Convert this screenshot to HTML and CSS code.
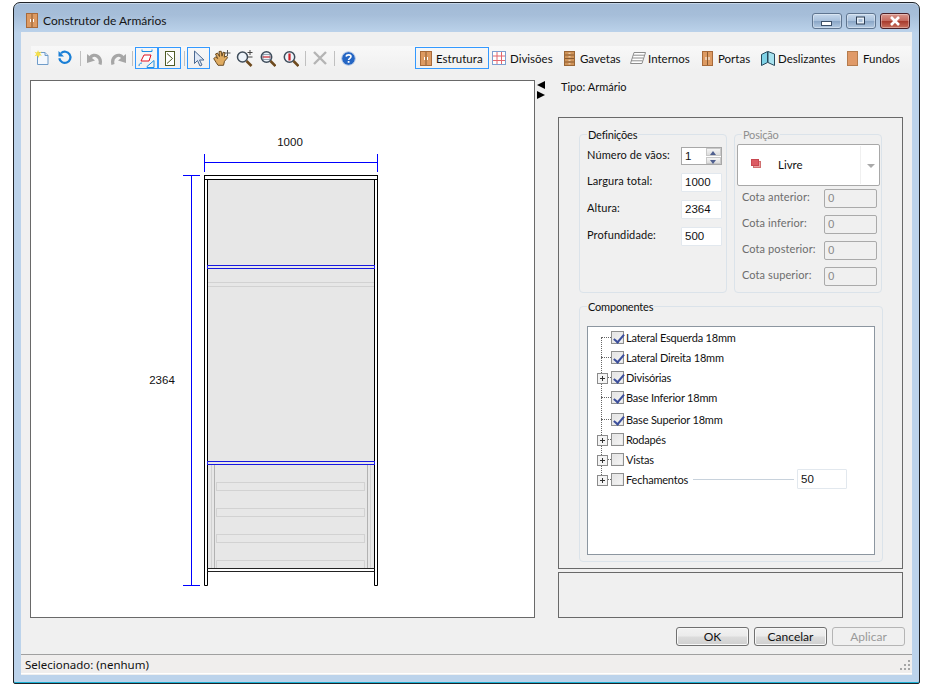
FILE: index.html
```html
<!DOCTYPE html>
<html lang="pt">
<head>
<meta charset="utf-8">
<title>Construtor de Armários</title>
<link rel="stylesheet" href="styles.css">
</head>
<body>
<div class="window">
  <header class="titlebar">
    <svg class="title-icon" width="12" height="15" viewBox="0 0 12 15"><rect x=".5" y=".5" width="11" height="14" fill="#dd9a62" stroke="#a86a3a"/><path d="M6 1v13" stroke="#8a5a30"/><path d="M4.500 6v3M7.500 6v3" stroke="#fff"/></svg>
    <span class="title-text">Construtor de Armários</span>
    <div class="caption">
      <div class="cap cap-min"><svg width="12" height="6" viewBox="0 0 12 6"><rect x=".5" y=".5" width="10" height="4" fill="#fff" stroke="#3b4f68"/></svg></div>
      <div class="cap cap-max"><svg width="12" height="10" viewBox="0 0 12 10"><rect x="1.500" y="1" width="8" height="7" fill="#e6eef7" stroke="#2d3e55"/><rect x="3.500" y="3" width="4" height="3" fill="#a9bfd8"/></svg></div>
      <div class="cap cap-close"><svg width="14" height="10" viewBox="0 0 14 10"><path d="M3 1l8 8M11 1l-8 8" stroke="#fff" stroke-width="2.600"/></svg></div>
    </div>
  </header>
  <div class="client">
    <div class="toolbar">
      <div class="tools">
        <span class="tool tool-new"><svg width="16" height="16" viewBox="0 0 16 16"><path d="M3.500 2.500h7.500l3 3v9h-10.500z" fill="#f4f8fd" stroke="#6f9cc9"/><path d="M11 2.500v3h3" fill="#d8e6f4" stroke="#6f9cc9"/><path d="M4 0l1 2.600L7.800 1.500 6 3.800 8 5.500 5.300 5.400 4.500 8 3.300 5.500.5 6.300 2.300 4 .5 1.800l2.600.7z" fill="#f5e04a"/></svg></span>
        <span class="tool"><svg width="16" height="16" viewBox="0 0 16 16"><path d="M4 3.200a5.600 5.600 0 1 1-1.700 5" fill="none" stroke="#1a7fd6" stroke-width="2.200"/><path d="M1.500 1v5.500h5.500z" fill="#1a7fd6"/></svg></span>
        <span class="tool-sep sep-a"></span>
        <span class="tool wide"><svg width="17" height="15" viewBox="0 0 17 15"><path d="M14 13.500C16 6 8 1 4 7" fill="none" stroke="#a6a6a6" stroke-width="3.200"/><path d="M1 3l8 6.500-8 2.500z" fill="#a6a6a6"/></svg></span>
        <span class="tool wide"><svg width="17" height="15" viewBox="0 0 17 15"><path d="M3 13.500C1 6 9 1 13 7" fill="none" stroke="#a6a6a6" stroke-width="3.200"/><path d="M16 3L8 9.500l8 2.500z" fill="#a6a6a6"/></svg></span>
        <span class="tool-sep sep-b"></span>
        <span class="tool-on"><svg width="17" height="19" viewBox="0 0 17 19"><path d="M4 .5v2h10v-2" fill="none" stroke="#1f8fe0"/><path d="M3 12l3-6h7l-2 6z" fill="#fff" stroke="#e01020"/><path d="M1 17c0-2 1-3 3-3M9 18.500v-1l7-6v7z" fill="none" stroke="#1f8fe0"/></svg></span>
        <span class="tool-on"><svg width="10" height="15" viewBox="0 0 10 15"><rect x=".5" y=".5" width="9" height="14" fill="#fff" stroke="#4d5a24"/><path d="M2 2.500l5.500 5-5.500 5" fill="none" stroke="#4d5a24"/></svg></span>
        <span class="tool-sep"></span>
        <span class="tool-on"><svg width="12" height="17" viewBox="0 0 12 17"><path d="M1.500 1v12.500l3-3 2.500 5.500 2-1-2.500-5h4.500z" fill="#dfe8f6" stroke="#4a6890"/></svg></span>
        <span class="tool"><svg width="18" height="17" viewBox="0 0 18 17"><path d="M.7 8.500l2-1.500 2 1.500L2.500 4l2-1 2 3.500L6 1.500l2.200-.3.800 5 1-4 2 .5-.8 4.500 2.300-1.200 1 1.800-3 3.500-1 4H5l-2-3z" fill="#e0ac62" stroke="#5e3e16" stroke-width=".9"/><path d="M14.500 0v6M11.500 3h6" stroke="#555"/></svg></span>
        <span class="tool"><svg width="17" height="17" viewBox="0 0 17 17"><circle cx="6.500" cy="7" r="5" fill="#eef4fa" stroke="#3e4c5a" stroke-width="1.500"/><path d="M10.500 11l5 5" stroke="#6e4a1e" stroke-width="2.600"/><path d="M14 0v5M11.500 2.500h5M11.500 7h5" stroke="#444"/></svg></span>
        <span class="tool"><svg width="16" height="17" viewBox="0 0 16 17"><circle cx="6.500" cy="7" r="5.200" fill="#eef4fa" stroke="#3e4c5a" stroke-width="1.500"/><path d="M10.500 11l5 5" stroke="#6e4a1e" stroke-width="2.600"/><path d="M2.500 7h8" stroke="#d02028" stroke-width="1.200"/><path d="M3 4.500h7v5H3z" fill="none" stroke="#596d80" stroke-width=".6"/></svg></span>
        <span class="tool"><svg width="16" height="17" viewBox="0 0 16 17"><circle cx="6.500" cy="7" r="5.200" fill="#eef4fa" stroke="#3e4c5a" stroke-width="1.500"/><path d="M10.500 11l5 5" stroke="#6e4a1e" stroke-width="2.600"/><path d="M6.500 3.500v7" stroke="#d02028" stroke-width="2.200"/></svg></span>
        <span class="tool-sep"></span>
        <span class="tool"><svg width="14" height="14" viewBox="0 0 14 14"><path d="M1 1l12 12M13 1L1 13" stroke="#b4b4b4" stroke-width="2.400"/></svg></span>
        <span class="tool-sep"></span>
        <span class="tool"><svg width="15" height="15" viewBox="0 0 15 15"><circle cx="7.500" cy="7.500" r="6.800" fill="#2566c4" stroke="#b9cbe6"/><path d="M5.200 5.600c.3-2.300 4.800-2.300 4.800 0 0 1.700-2.400 1.700-2.400 3.500" fill="none" stroke="#fff" stroke-width="1.600"/><rect x="6.700" y="10" width="1.800" height="1.800" fill="#fff"/></svg></span>
      </div>
      <div class="tabs">
        <span class="tab tab-on tab-estrutura"><svg width="12" height="15" viewBox="0 0 12 15"><rect x=".5" y=".5" width="11" height="14" fill="#dd9a62" stroke="#a86a3a"/><path d="M6 1v13" stroke="#8a5a30"/><path d="M4.500 6v3M7.500 6v3" stroke="#fff"/></svg>Estrutura</span>
        <span class="tab tab-divisoes"><svg width="14" height="14" viewBox="0 0 14 14"><rect x=".5" y=".5" width="13" height="13" fill="#fff" stroke="#7e9fd0"/><path d="M5 1v12M9.500 1v12M1 5h12M1 9.500h12" stroke="#e2666e"/></svg>Divisões</span>
        <span class="tab tab-gavetas"><svg width="11" height="15" viewBox="0 0 11 15"><rect x=".5" y=".5" width="10" height="14" fill="#cf9358" stroke="#9a6636"/><path d="M1 4h9M1 7.500h9M1 11h9" stroke="#8a5a30"/><path d="M4.500 2.300h2M4.500 5.800h2M4.500 9.300h2M4.500 12.800h2" stroke="#f0dcc4"/></svg>Gavetas</span>
        <span class="tab tab-internos"><svg width="16" height="12" viewBox="0 0 16 12"><path d="M4 .5h11.500L12 11.500H.5z" fill="#fff" stroke="#8d8d8d"/><path d="M3.200 3.200h11M2.300 6h11M1.500 8.800h11" stroke="#8d8d8d"/></svg>Internos</span>
        <span class="tab tab-portas"><svg width="11" height="15" viewBox="0 0 11 15"><rect x=".5" y=".5" width="10" height="14" fill="#dd9a62" stroke="#a86a3a"/><path d="M5.500 1v13" stroke="#8a5a30"/><path d="M4 6v3M7 6v3" stroke="#fff"/></svg>Portas</span>
        <span class="tab tab-deslizantes"><svg width="14" height="15" viewBox="0 0 14 15"><path d="M.5 3.500l6-3v11l-6 3z" fill="#7fd2e6" stroke="#27495c"/><path d="M7 .5l6.500 2.500v11.500L7 11.500z" fill="#a7e2ef" stroke="#27495c"/></svg>Deslizantes</span>
        <span class="tab tab-fundos"><svg width="11" height="15" viewBox="0 0 11 15"><rect x=".5" y=".5" width="10" height="14" fill="#e09a68" stroke="#b57c4d"/></svg>Fundos</span>
      </div>
    </div>

    <main class="main">
      <div class="canvas">
        <svg class="drawing" width="503" height="536" viewBox="31 81 503 536">
          <g fill="#e7e7e7">
            <rect x="207" y="179" width="168" height="390"/>
          </g>
          <g fill="none" stroke="#d2d2d2" stroke-width="1">
            <path d="M208 282.500h166M208 286.500h166"/>
            <rect x="216.500" y="482.500" width="148" height="8"/>
            <rect x="216.500" y="508.500" width="148" height="8"/>
            <rect x="216.500" y="534.500" width="148" height="8"/>
            <path d="M216.500 568v-7.500h148v7.500"/>
            <path d="M211.500 464v104M370.500 464v104"/>
          </g>
          <path d="M214.500 464v104M367.500 464v104" stroke="#b2b2b2" fill="none"/>
          <g fill="none" stroke="#000">
            <rect x="204.500" y="175.500" width="173" height="4"/>
            <path d="M204.500 179.500v406h3v-406M374.500 179.500v406h3v-406"/>
            <path d="M207.500 568.500h167M207.500 571.500h167" stroke="#222"/>
          </g>
          <g fill="none" stroke="#1818e0">
            <rect x="207.500" y="265.500" width="167" height="3"/>
            <rect x="207.500" y="461.500" width="167" height="3"/>
          </g>
          <g fill="none" stroke="#0000ff">
            <path d="M204.500 154v18M377.500 154v18M204.500 162.500h173"/>
            <path d="M183 175.500h17M183 585.500h17M191.500 175.500v410"/>
          </g>
          <text class="dim" x="290" y="146" text-anchor="middle">1000</text>
          <text class="dim" x="162" y="384" text-anchor="middle">2364</text>
        </svg>
      </div>
      <div class="arrows">
        <span class="arrow-left"></span>
        <span class="arrow-right"></span>
      </div>
      <div class="side">
        <div class="tipo">Tipo: Armário</div>
        <section class="panel">
          <div class="groups-top">
            <fieldset class="group group-def">
              <legend>Definições</legend>
              <div class="def-grid">
                <label>Número de vãos:</label>
                <div class="spin"><span>1</span><div class="spin-btns"><i class="up"></i><i class="down"></i></div></div>
                <label>Largura total:</label>
                <div class="field">1000</div>
                <label>Altura:</label>
                <div class="field">2364</div>
                <label>Profundidade:</label>
                <div class="field">500</div>
              </div>
            </fieldset>
            <fieldset class="group group-pos">
              <legend>Posição</legend>
              <div class="combo">
                <div class="combo-value">
                  <svg width="10" height="9" viewBox="0 0 10 9"><rect x="2.500" y="2.500" width="7" height="6" fill="#e8a0a0" stroke="#d07070"/><rect x=".5" y=".5" width="7" height="6" fill="#dc5a62" stroke="#c84850"/></svg>
                  <span>Livre</span>
                </div>
                <i class="combo-arrow"></i>
              </div>
              <div class="cota-grid">
                <label>Cota anterior:</label><div class="field-off">0</div>
                <label>Cota inferior:</label><div class="field-off">0</div>
                <label>Cota posterior:</label><div class="field-off">0</div>
                <label>Cota superior:</label><div class="field-off">0</div>
              </div>
            </fieldset>
          </div>
          <fieldset class="group group-comp">
            <legend>Componentes</legend>
            <div class="tree">
              <div class="rows">
                <div class="row"><i class="stub"></i><i class="check on"></i><span>Lateral Esquerda 18mm</span></div>
                <div class="row"><i class="stub"></i><i class="check on"></i><span>Lateral Direita 18mm</span></div>
                <div class="row"><i class="plus"></i><i class="check on"></i><span>Divisórias</span></div>
                <div class="row"><i class="stub"></i><i class="check on"></i><span>Base Inferior 18mm</span></div>
                <div class="row tall"><i class="stub"></i><i class="check on"></i><span>Base Superior 18mm</span></div>
                <div class="row"><i class="plus"></i><i class="check"></i><span>Rodapés</span></div>
                <div class="row"><i class="plus"></i><i class="check"></i><span>Vistas</span></div>
                <div class="row"><i class="plus"></i><i class="check"></i><span>Fechamentos</span><b class="slider"></b><div class="field field-tree">50</div></div>
              </div>
            </div>
          </fieldset>
        </section>
        <section class="panel-empty"></section>
      </div>
    </main>

    <div class="actions">
      <button class="btn" type="button">OK</button>
      <button class="btn" type="button">Cancelar</button>
      <button class="btn" type="button" disabled>Aplicar</button>
    </div>
    <footer class="status">
      <span>Selecionado: (nenhum)</span>
      <svg class="grip" width="12" height="12" viewBox="0 0 12 12"><path d="M9 1h2v2H9zM5 5h2v2H5zM9 5h2v2H9zM1 9h2v2H1zM5 9h2v2H5zM9 9h2v2H9z" fill="#a5a5a5"/></svg>
    </footer>
  </div>
</div>
</body>
</html>
```
FILE: styles.css
```css
* { box-sizing: border-box; }
html, body { margin: 0; padding: 0; background: #fff; }
body {
  width: 932px;
  height: 686px;
  overflow: hidden;
  font-family: Lato, "Noto Sans", sans-serif;
  font-size: 11px;
  color: #111;
}
svg { flex: none; }
.window {
  width: 907px;
  height: 682px;
  margin: 2px 0 0 13px;
  border: 1px solid #1f2328;
  border-radius: 7px 7px 2px 2px;
  background: linear-gradient(#a2bad6 0, #a6bed9 12px, #bcd3eb 30px, #bcd3eb 100%);
  box-shadow: inset 0 -1px 0 #1bb0d4, inset 0 1px 0 #c5d6e8;
  display: flex;
  flex-direction: column;
}
.titlebar {
  height: 29px;
  flex: none;
  display: flex;
  align-items: flex-start;
  padding: 10px 9px 0 12px;
}
.title-text { margin-left: 5px; font-size: 12px; line-height: 16px; color: #151515; }
.caption { margin-left: auto; display: flex; gap: 4px; }
.cap {
  width: 30px;
  height: 16px;
  border: 1px solid #5f7590;
  border-radius: 3px;
  display: flex;
  align-items: center;
  justify-content: center;
  background: linear-gradient(#c6d8ec 0, #a9c1dc 48%, #8aa6c6 52%, #b4cbe3 100%);
  box-shadow: inset 0 0 0 1px rgba(255,255,255,.35);
}
.cap-min svg { margin-top: 6px; }
.cap-close {
  width: 30px;
  border-color: #4a1f26;
  background: linear-gradient(#d9968c 0, #c56a5e 48%, #a83a2c 52%, #c8705e 100%);
}
.client {
  flex: 1;
  margin: 0 7px 8px 7px;
  background: #f0f0f0;
  display: flex;
  flex-direction: column;
}
.toolbar {
  margin: 14px 1px 0 10px;
  height: 24px;
  flex: none;
  display: flex;
  align-items: center;
  justify-content: space-between;
  background: linear-gradient(#f8f8f8, #f0f0f0);
}
.tools, .tabs { display: flex; align-items: center; height: 24px; }
.tool { width: 23px; height: 23px; flex: none; display: flex; align-items: center; justify-content: center; }
.tool.tool-new { width: 22px; }
.tool.wide { width: 24px; }
.tool-sep { width: 1px; height: 15px; flex: none; background: #c0c0c0; margin: 0 2px 0 3px; }
.tool-sep.sep-a { margin-left: 4px; margin-right: 1px; }
.tool-sep.sep-b { margin-left: 2px; }
.tool-on {
  width: 23px;
  height: 22px;
  flex: none;
  border: 1px solid #3399ff;
  display: flex;
  align-items: center;
  justify-content: center;
}
.tab {
  height: 22px;
  display: flex;
  align-items: center;
  gap: 5px;
  white-space: nowrap;
  font-size: 11.500px;
}
.tab-on { border: 1px solid #3399ff; padding: 0 5px 0 4px; }
.tab-estrutura { width: 74px; gap: 4px; }
.tab-divisoes { width: 72px; margin-left: 3px; gap: 4px; }
.tab-gavetas { width: 66px; gap: 5px; }
.tab-internos { width: 72px; gap: 2px; }
.tab-portas { width: 59px; }
.tab-deslizantes { width: 86px; gap: 3px; }
.tab-fundos { width: 64px; }
.main { margin: 10px 0 0 9px; height: 538px; flex: none; display: flex; }
.canvas { width: 505px; height: 538px; flex: none; background: #fff; border: 1px solid #696969; }
.drawing { display: block; }
.dim { font-family: "Liberation Sans", sans-serif; font-size: 11.500px; fill: #111; }
.arrows { width: 23px; flex: none; padding: 1px 0 0 2px; display: flex; flex-direction: column; gap: 2px; }
.arrow-left, .arrow-right { width: 0; height: 0; border-top: 4px solid transparent; border-bottom: 4px solid transparent; }
.arrow-left { border-right: 8px solid #000; }
.arrow-right { border-left: 8px solid #000; }
.side { width: 345px; flex: none; display: flex; flex-direction: column; }
.tipo { height: 37px; padding: 0 0 0 3px; line-height: 14px; }
.panel {
  height: 452px;
  border: 1px solid #696969;
  padding: 9px 20px 0 20px;
}
.group { margin: 0; padding: 0; border: 1px solid #dbe3ea; border-radius: 4px; min-width: 0; }
.group legend { margin-left: 7px; padding: 0 1px; line-height: 15px; letter-spacing: -.2px; }
.groups-top { display: flex; gap: 7px; }
.group-def, .group-pos { width: 148px; height: 166px; }
.group-pos legend { color: #8f8f8f; }
.def-grid {
  display: grid;
  grid-template-columns: 94px 41px;
  grid-template-rows: 18px 19px 19px 19px;
  row-gap: 8px;
  margin: 5px 0 0 7px;
  align-items: center;
}
.def-grid label, .cota-grid label { position: relative; top: -2px; letter-spacing: .1px; }
.field, .spin, .field-off {
  height: 19px;
  line-height: 17px;
  font-family: "Liberation Sans", sans-serif;
  font-size: 11.500px;
}
.field { background: #fff; border: 1px solid #e2e8ee; padding-left: 3px; border-radius: 1px; }
.spin { height: 18px; background: #fff; border: 1px solid #a8a8a8; padding-left: 3px; display: flex; justify-content: space-between; }
.spin-btns { width: 15px; display: flex; flex-direction: column; gap: 1px; }
.spin-btns i {
  flex: 1;
  background: linear-gradient(#f5f5f5, #dcdcdc);
  border: 1px solid #c8c8c8;
  position: relative;
}
.spin-btns i::after {
  content: "";
  position: absolute;
  left: 3px;
  top: 2px;
  border-left: 3.500px solid transparent;
  border-right: 3.500px solid transparent;
}
.spin-btns .up::after { border-bottom: 4px solid #4f5f8f; }
.spin-btns .down::after { border-top: 4px solid #4f5f8f; }
.combo {
  width: 143px;
  height: 42px;
  margin: 2px 0 0 2px;
  background: #fff;
  border: 1px solid #a8a8a8;
  border-radius: 2px;
  display: flex;
  align-items: center;
}
.combo-value {
  width: 123px;
  height: 38px;
  display: flex;
  align-items: center;
  padding: 0 0 2px 13px;
  gap: 17px;
  border-right: 1px solid #f0f0f0;
  font-size: 11.500px;
}
.combo-value svg { margin-top: -2px; }
.combo-arrow {
  margin: 2px 0 0 6px;
  border-left: 4px solid transparent;
  border-right: 4px solid transparent;
  border-top: 4px solid #a9a9a9;
}
.cota-grid {
  display: grid;
  grid-template-columns: 82px 53px;
  grid-auto-rows: 19px;
  row-gap: 7px;
  margin: 3px 0 0 7px;
  align-items: center;
  color: #6d6d6d;
}
.field-off { background: #f0f0f0; border: 1px solid #aaa; border-radius: 2px; padding-left: 3px; color: #888; }
.group-comp { width: 304px; height: 263px; margin-top: 6px; }
.tree {
  width: 288px;
  height: 229px;
  margin: 12px 0 0 7px;
  background: #fff;
  border: 1px solid #8c96a0;
}
.rows { position: relative; padding: 0 0 0 9px; }
.rows::before {
  content: "";
  position: absolute;
  left: 13px;
  top: 10px;
  height: 142px;
  border-left: 1px dotted #666;
}
.row { height: 20px; display: flex; align-items: center; position: relative; letter-spacing: -.2px; }
.row.tall { height: 22px; padding-top: 2px; }
.stub, .plus { width: 14px; height: 9px; flex: none; position: relative; }
.stub::after, .plus::after {
  content: "";
  position: absolute;
  left: 4px;
  right: 0;
  top: 4px;
  border-top: 1px dotted #666;
}
.plus::after { left: 9px; }
.plus::before {
  content: "";
  position: absolute;
  left: 0;
  top: 0;
  z-index: 1;
  width: 9px;
  height: 9px;
  border: 1px solid #8b8b8b;
  background:
    linear-gradient(#333, #333) center / 5px 1px no-repeat,
    linear-gradient(#333, #333) center / 1px 5px no-repeat,
    #f4f4f4;
}
.check {
  width: 13px;
  height: 13px;
  flex: none;
  margin-right: 2px;
  border: 1px solid #8e8f8f;
  background: linear-gradient(135deg, #e2e2e2, #f7f7f7);
  box-shadow: inset 0 0 0 1px #e9e9e9;
  position: relative;
}
.check.on::after {
  content: "";
  position: absolute;
  left: 3.500px;
  top: 0;
  width: 4px;
  height: 9px;
  border: solid #3c4f9c;
  border-width: 0 2px 2px 0;
  transform: rotate(40deg);
}
.slider { width: 101px; height: 1px; margin: 0 3px 0 auto; background: #c8d2dc; }
.row:last-child > span { width: 67px; }
.field-tree { width: 50px; height: 20px; line-height: 18px; margin-right: 27px; letter-spacing: 0; }
.panel-empty { margin-top: 3px; height: 46px; border: 1px solid #696969; }
.actions { margin: 9px 7px 0 0; height: 19px; flex: none; display: flex; justify-content: flex-end; gap: 5px; }
.btn {
  width: 73px;
  height: 19px;
  padding: 0;
  font: 12px Lato, sans-serif;
  line-height: 15px;
  color: #111;
  border: 1px solid #707070;
  border-radius: 3px;
  background: linear-gradient(#f2f2f2 0, #ebebeb 48%, #dcdcdc 52%, #cfcfcf 100%);
  box-shadow: inset 0 0 0 1px #f8f8f8;
}
.btn[disabled] { color: #9a9a9a; background: #f0f0f0; border-color: #b5b5b5; box-shadow: none; }
.status {
  margin-top: 8px;
  height: 20px;
  flex: none;
  display: flex;
  align-items: center;
  justify-content: space-between;
  padding: 0 1px 0 4px;
  background: #f0eeed;
  border-top: 1px solid #a0a0a0;
  box-shadow: inset 0 -1px 0 #fff;
  font-family: "Noto Sans", sans-serif;
  font-size: 11.500px;
}
```
